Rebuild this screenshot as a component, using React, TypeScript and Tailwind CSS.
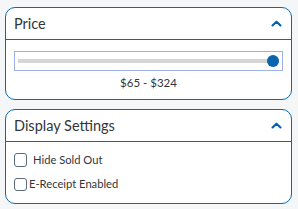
import React from "react";

function Chevron() {
  return (
    <svg width="11" height="7" viewBox="0 0 11 7" className="shrink-0">
      <path d="M1.5 5.5 L5.5 1.7 L9.5 5.5" fill="none" stroke="#0a5ea8" strokeWidth="2.1" strokeLinecap="round" strokeLinejoin="round" />
    </svg>
  );
}

function Header({ title }: { title: string }) {
  return (
    <div className="flex h-[32px] items-center justify-between border-b border-[#0a6ab0] pl-[8px] pr-[9px]">
      <span className="text-[14.5px] leading-[20px] text-[#32363a]">{title}</span>
      <Chevron />
    </div>
  );
}

export default function App() {
  return (
    <div
      className="min-h-[209px] w-[298px] bg-[#f5f6f7] pl-[5px] pt-[7px]"
      style={{ fontFamily: 'Lato, "Liberation Sans", sans-serif' }}
    >
      <div className="flex w-[287px] flex-col gap-[9px]">
        <div className="rounded-[10px] border border-[#0a6ab0] bg-white">
          <Header title="Price" />
          <div className="flex flex-col px-[8px] pb-[8px] pt-[11px]">
            <div className="relative flex h-[20px] items-center border border-[#9fb0e8] px-[3px]">
              <div className="h-[4px] flex-1 bg-[#d3d6d2]" />
              <div className="absolute right-[3px] top-1/2 h-[12px] w-[12px] -translate-y-1/2 rounded-full bg-[#0a65ad]" />
            </div>
            <div className="mt-[4px] text-center text-[11.5px] leading-[16px] text-[#32363a]">$65 - $324</div>
          </div>
        </div>
        <div className="rounded-[10px] border border-[#0a6ab0] bg-white">
          <Header title="Display Settings" />
          <div className="flex flex-col gap-[8px] px-[8px] pb-[11px] pt-[10px]">
            <label className="flex h-[16px] items-center">
              <span className="h-[14px] w-[13px] rounded-[3px] border border-[#5b6b7b] bg-white" />
              <span className="ml-[6px] text-[11.2px] leading-[16px] text-[#32363a]">Hide Sold Out</span>
            </label>
            <label className="flex h-[16px] items-center">
              <span className="h-[13px] w-[13px] rounded-[3px] border border-[#5b6b7b] bg-white" />
              <span className="ml-[2px] text-[11.2px] leading-[16px] text-[#32363a]">E-Receipt Enabled</span>
            </label>
          </div>
        </div>
      </div>
    </div>
  );
}
